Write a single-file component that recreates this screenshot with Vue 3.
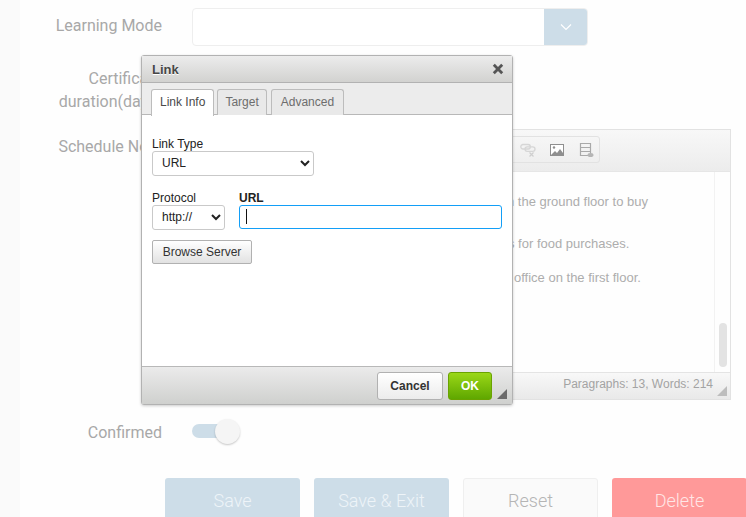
<script setup>
const actions = [
  { label: 'Save', kind: 'primary' },
  { label: 'Save & Exit', kind: 'primary' },
  { label: 'Reset', kind: 'plain' },
  { label: 'Delete', kind: 'danger' }
]
</script>

<template>
  <div class="page">
    <main class="form">
      <div class="row mode-row">
        <label class="label">Learning Mode</label>
        <div class="combo">
          <div class="combo-field"></div>
          <div class="combo-btn">
            <svg width="12" height="8" viewBox="0 0 12 8"><path d="M1 1.5 6 6.5 11 1.5" fill="none" stroke="#fff" stroke-width="1.2"/></svg>
          </div>
        </div>
      </div>
      <div class="row cert-row">
        <label class="label">Certificate<br />duration(days)</label>
      </div>
      <div class="row notes-row">
        <label class="label notes-label">Schedule Note</label>
        <div class="editor">
          <div class="toolbar">
            <div class="tool-group">
              <svg class="ti unlink" width="16" height="16" viewBox="0 0 16 16"><g fill="none" stroke="#d6d6d6" stroke-width="1.3"><rect x="0.8" y="2.5" width="9.5" height="4.5" rx="2.2"/><rect x="5" y="4.8" width="10" height="4.5" rx="2.2"/></g><path d="M9.5 10.5l4 4m0-4l-4 4" stroke="#cfcfcf" stroke-width="1.2"/></svg>
              <svg class="ti" width="16" height="16" viewBox="0 0 16 16"><rect x="1.5" y="2.5" width="13" height="11" fill="#fff" stroke="#8f8f8f"/><circle cx="5" cy="5.5" r="1.2" fill="#8f8f8f"/><path d="M2 13l4-4 2 2 3-4 3 4v2z" fill="#8f8f8f"/></svg>
              <svg class="ti" width="16" height="16" viewBox="0 0 16 16"><path d="M2.5 1.5h10v12h-10zM2.5 5.5h10M2.5 9.5h10" fill="none" stroke="#a9a9a9" stroke-width="1.2"/><ellipse cx="12.5" cy="13" rx="3" ry="2" fill="#b5b5b5"/></svg>
            </div>
          </div>
          <div class="editor-main">
            <div class="content">
              <p class="p1">n the ground floor to buy</p>
              <p class="p2">s for food purchases.</p>
              <p class="p3">office on the first floor.</p>
            </div>
            <div class="scroll"><div class="thumb"></div></div>
          </div>
          <div class="status">
            <span>Paragraphs: 13, Words: 214</span>
            <i class="grip grip-light"></i>
          </div>
        </div>
      </div>
      <div class="row confirm-row">
        <label class="label">Confirmed</label>
        <div class="toggle"><div class="knob"></div></div>
      </div>
      <div class="actions">
        <button v-for="a in actions" :key="a.label" class="action" :class="a.kind">{{ a.label }}</button>
      </div>
    </main>

    <section class="dialog">
      <header class="dlg-title">
        <span>Link</span>
        <svg width="12" height="12" viewBox="0 0 12 12"><path d="M1.8 1.8l8.4 8.4m0-8.4l-8.4 8.4" stroke="#555" stroke-width="2.8"/></svg>
      </header>
      <nav class="tabs">
        <span class="tab active">Link Info</span>
        <span class="tab">Target</span>
        <span class="tab">Advanced</span>
      </nav>
      <div class="dlg-body">
        <label class="f-label">Link Type</label>
        <select class="sel type-sel"><option>URL</option></select>
        <div class="url-row">
          <div class="proto">
            <label class="f-label">Protocol</label>
            <select class="sel proto-sel"><option>http://</option></select>
          </div>
          <div class="url">
            <label class="f-label strong">URL</label>
            <div class="url-box"><i class="caret"></i></div>
          </div>
        </div>
        <button class="browse">Browse Server</button>
      </div>
      <footer class="dlg-foot">
        <button class="cancel">Cancel</button>
        <button class="ok">OK</button>
        <i class="grip"></i>
      </footer>
    </section>
  </div>
</template>

<style>
html, body { margin: 0; padding: 0; background: #fefefe; }
</style>

<style scoped>
.page {
  position: relative;
  width: 746px;
  height: 517px;
  overflow: hidden;
  background: #fafafa;
  font-family: Roboto, "Liberation Sans", sans-serif;
}
.form {
  margin-left: 20px;
  height: 517px;
  background: #fefefe;
  box-sizing: border-box;
  padding-top: 8px;
  display: flex;
  flex-direction: column;
}
.form > * { flex: none; }
.row { display: flex; gap: 30px; }
.label {
  width: 142px;
  flex: none;
  text-align: right;
  font-size: 16px;
  line-height: 23px;
  color: #a8a8a8;
}
.mode-row { height: 38px; align-items: center; }
.mode-row .label { padding-bottom: 4px; }
.combo {
  width: 396px;
  height: 38px;
  box-sizing: border-box;
  display: flex;
  border: 1px solid #eeeeee;
  border-radius: 4px;
  overflow: hidden;
  background: #fff;
}
.combo-field { flex: 1; }
.combo-btn {
  width: 43px;
  background: #cddde8;
  display: flex;
  align-items: center;
  justify-content: center;
}
.cert-row { margin-top: 21px; height: 62px; }
.notes-row { height: 271px; }
.notes-label { padding-top: 6px; }
.editor {
  width: 539px;
  height: 271px;
  box-sizing: border-box;
  border: 1px solid #e2e2e2;
  display: flex;
  flex-direction: column;
  background: #fefefe;
}
.toolbar {
  height: 42px;
  flex: none;
  box-sizing: border-box;
  border-bottom: 1px solid #e6e6e6;
  background: linear-gradient(#f8f8f8, #ececec);
  padding: 6px 0 0 0;
  display: flex;
}
.tool-group {
  margin-left: 310px;
  width: 97px;
  height: 27px;
  box-sizing: border-box;
  border: 1px solid #e2e2e2;
  border-radius: 3px;
  display: flex;
  align-items: center;
  justify-content: flex-end;
  gap: 13px;
  padding: 1px 5px 0 0;
}
.ti { flex: none; }
.editor-main { flex: 1; display: flex; min-height: 0; }
.content { flex: 1; font: 13px/18px "Liberation Sans", Arial, sans-serif; color: #adadad; }
.content p { margin: 0; white-space: nowrap; }
.p1 { padding: 21px 0 0 314px; }
.p2 { padding: 24px 0 0 315px; }
.p3 { padding: 16px 0 0 321px; }
.scroll {
  width: 16px;
  box-sizing: border-box;
  border-left: 1px solid #f2f2f2;
  display: flex;
  justify-content: center;
  align-items: flex-end;
  padding: 0 0 5px 1px;
}
.thumb { width: 8px; height: 44px; border-radius: 4px; background: #e3e3e3; }
.status {
  height: 27px;
  flex: none;
  box-sizing: border-box;
  border-top: 1px solid #e4e4e4;
  background: linear-gradient(#f8f8f8, #e9e9e9);
  display: flex;
  align-items: center;
  justify-content: flex-end;
  padding: 0 17px 4px 0;
  font: 12px "Liberation Sans", Arial, sans-serif;
  color: #a3a3a3;
  position: relative;
}
.confirm-row { margin-top: 19px; height: 25px; align-items: center; }
.confirm-row .label { padding-top: 2px; }
.toggle {
  position: relative;
  width: 36px;
  height: 14px;
  margin-top: -1px;
  background: #cddde8;
  border-radius: 7px;
}
.knob {
  position: absolute;
  left: 23px;
  top: -5px;
  width: 25px;
  height: 25px;
  border-radius: 50%;
  background: #f5f5f5;
  box-shadow: 0 1px 2px rgba(0, 0, 0, 0.22);
}
.actions { margin: 34px 0 0 145px; display: flex; gap: 14px; }
.action {
  flex: none;
  width: 135px;
  height: 44px;
  box-sizing: border-box;
  border: 1px solid transparent;
  border-radius: 3px;
  font: 300 18px Roboto, sans-serif;
  color: #fff;
  padding: 0;
}
.primary { background: #cddde8; color: #eef4f8; }
.plain { background: #fafafa; border-color: #efefef; color: #b5b5b5; }
.danger { background: #ff9999; color: #ffe6e6; }

.dialog {
  position: absolute;
  left: 141px;
  top: 55px;
  width: 372px;
  height: 350px;
  box-sizing: border-box;
  border: 1px solid #b2b2b2;
  border-radius: 3px;
  background: #fff;
  box-shadow: 0 1px 3px rgba(0, 0, 0, 0.2);
  display: flex;
  flex-direction: column;
  font: 12px "Liberation Sans", Arial, sans-serif;
  color: #333;
}
.dlg-title {
  height: 27px;
  flex: none;
  box-sizing: border-box;
  border-bottom: 1px solid #b2b2b2;
  background: linear-gradient(#ececec, #d2d2d0);
  display: flex;
  align-items: center;
  justify-content: space-between;
  padding: 0 8px 0 10px;
  font-weight: bold;
  font-size: 13px;
  color: #474747;
  text-shadow: 0 1px 0 #fff;
}
.tabs {
  height: 32px;
  flex: none;
  box-sizing: border-box;
  background: #ececec;
  border-bottom: 1px solid #b8b8b8;
  padding: 6px 0 0 9px;
  display: flex;
  gap: 4px;
}
.tab {
  height: 26px;
  box-sizing: border-box;
  padding: 0 7px;
  border: 1px solid #bcbcbc;
  border-bottom: none;
  border-radius: 3px 3px 0 0;
  background: #e9e9e9;
  line-height: 24px;
  color: #6d6d6d;
}
.tab:last-child { padding: 0 9px; }
.tab.active {
  height: 27px;
  background: #fff;
  color: #4a4a4a;
  padding: 0 8px;
  margin-right: -1px;
  position: relative;
  z-index: 1;
}
.dlg-body {
  flex: 1;
  padding: 22px 10px 0;
  display: flex;
  flex-direction: column;
  align-items: flex-start;
}
.f-label { display: block; line-height: 14px; color: #222; }
.strong { font-weight: bold; }
.sel {
  display: block;
  height: 25px;
  box-sizing: border-box;
  border: 1px solid #c9c9c9;
  border-radius: 3px;
  background: #fff;
  font: 12px "Liberation Sans", Arial, sans-serif;
  color: #222;
  padding: 0 0 1px 5px;
  margin: 0;
}
.type-sel { width: 162px; }
.proto-sel { width: 73px; }
.url-row { display: flex; gap: 14px; margin-top: 15px; }
.url-box {
  position: relative;
  width: 263px;
  height: 24px;
  box-sizing: border-box;
  border: 1px solid #139ff7;
  border-radius: 3px;
  background: #fff;
}
.caret {
  position: absolute;
  left: 6px;
  top: 3px;
  width: 1px;
  height: 15px;
  background: #111;
}
.browse {
  margin-top: 10px;
  width: 100px;
  height: 24px;
  box-sizing: border-box;
  border: 1px solid #b1b1b1;
  border-radius: 2px;
  background: linear-gradient(#fff, #e2e2e2);
  font: 12px "Liberation Sans", Arial, sans-serif;
  color: #333;
  padding: 0;
}
.dlg-foot {
  height: 38px;
  flex: none;
  box-sizing: border-box;
  border-top: 1px solid #b8b8b8;
  background: linear-gradient(#ebebeb, #cfd0ce);
  display: flex;
  align-items: flex-start;
  justify-content: flex-end;
  padding: 5px 20px 0 0;
  gap: 5px;
  position: relative;
}
.cancel, .ok {
  height: 28px;
  box-sizing: border-box;
  border-radius: 3px;
  font: bold 12px "Liberation Sans", Arial, sans-serif;
  padding: 0;
}
.cancel {
  width: 66px;
  border: 1px solid #b1b1b1;
  background: linear-gradient(#fff, #ececec);
  color: #333;
}
.ok {
  width: 44px;
  border: 1px solid #6aa300;
  background: linear-gradient(#9ad717, #5fa700);
  color: #fff;
}
.grip {
  position: absolute;
  right: 5px;
  bottom: 5px;
  width: 10px;
  height: 10px;
  background: #6b6b6b;
  clip-path: polygon(100% 0, 100% 100%, 0 100%);
}
.grip-light { background: #bdbdbd; right: 3px; bottom: 3px; }
</style>
